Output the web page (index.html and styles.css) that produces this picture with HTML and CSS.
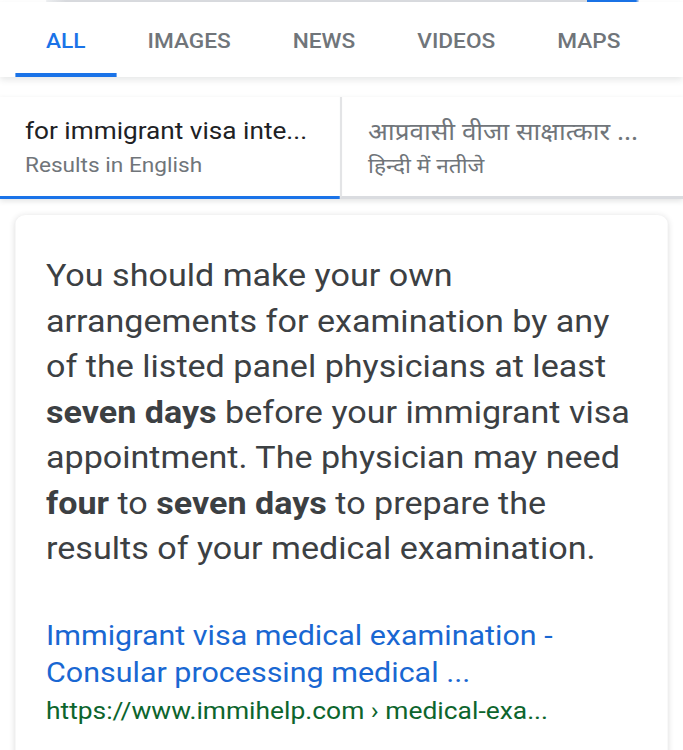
FILE: index.html
```html
<!DOCTYPE html>
<html lang="en">
<head>
    <meta charset="UTF-8">
    <meta name="viewport" content="width=device-width, initial-scale=1.0">
    <title>for immigrant visa interview - Google Search</title>
    <link rel="stylesheet" href="styles.css">
</head>
<body>

<div class="page">

    <div class="search-edge">
        <div class="search-edge-line"></div>
    </div>

    <div class="tabs">
        <div class="tab active">ALL</div>
        <div class="tab">IMAGES</div>
        <div class="tab">NEWS</div>
        <div class="tab">VIDEOS</div>
        <div class="tab">MAPS</div>
        <div class="tab">SHOPPING</div>
        <div class="tabs-fade"></div>
    </div>

    <div class="lang-row">
        <div class="lang active">
            <div class="lang-title">for immigrant visa inte...</div>
            <div class="lang-sub">Results in English</div>
        </div>
        <div class="lang">
            <div class="lang-title hi">आप्रवासी वीजा साक्षात्कार ...</div>
            <div class="lang-sub hi">हिन्दी में नतीजे</div>
        </div>
    </div>

    <div class="card">
        <p class="snippet">
            You should make your own arrangements for examination by any of the listed panel physicians at least
            <b>seven days</b> before your immigrant visa appointment. The physician may need
            <b>four</b> to <b>seven days</b> to prepare the results of your medical examination.
        </p>
        <a class="result-link" href="#">Immigrant visa medical examination - Consular processing medical ...</a>
        <div class="result-url">https://www.immihelp.com › medical-exa...</div>
    </div>

</div>

</body>
</html>
```

FILE: styles.css
```css
body {
    margin: 0;
    background: #fff;
    font-family: Roboto, "Noto Sans", sans-serif;
    overflow: hidden;
}

.page {
    width: 621px;
    transform: scaleX(1.1);
    transform-origin: 0 0;
}

.search-edge {
    padding: 0 40px 0 42px;
}
.search-edge-line {
    height: 2px;
    background: linear-gradient(90deg, #eef0f2 0, #dadce0 18px, #dadce0 492px, #1a73e8 492px, #1a73e8 536px, #e8eaed 539px);
}

/* tab bar */
.tabs {
    position: relative;
    display: flex;
    height: 75px;
    padding-left: 13.6px;
    background: #fff;
    box-shadow: 0 3px 6px rgba(60, 64, 67, 0.12);
    overflow: hidden;
    white-space: nowrap;
}
.tab {
    padding: 27px 28.2px 0;
    font-size: 20.6px;
    font-weight: 500;
    color: #70757a;
    border-bottom: 4px solid transparent;
    box-sizing: border-box;
}
.tab.active {
    color: #1a73e8;
    border-bottom-color: #1a73e8;
}
.tabs-fade {
    position: absolute;
    right: 0;
    top: 0;
    bottom: 0;
    width: 40px;
    background: linear-gradient(90deg, rgba(255, 255, 255, 0.5), rgba(255, 255, 255, 0.88) 70%);
}

/* language chooser */
.lang-row {
    display: flex;
    margin-top: 20px;
    background: #fff;
    box-shadow: 0 2px 5px rgba(60, 64, 67, 0.15);
}
.lang {
    flex: 1;
    height: 102px;
    padding: 19px 0 0 22.7px;
    box-sizing: border-box;
    border-bottom: 3px solid #dadce0;
    white-space: nowrap;
    overflow: hidden;
}
.lang + .lang {
    border-left: 2px solid #e3e4e6;
    padding-left: 23.5px;
}
.lang.active {
    border-bottom-color: #1a73e8;
}
.lang-title {
    font-size: 23.8px;
    line-height: 30px;
    color: #202124;
}
.lang-sub {
    font-size: 20.6px;
    line-height: 38px;
    color: #70757a;
}
.lang-title.hi {
    font-size: 23.7px;
}
.lang-title.hi,
.lang-sub.hi {
    color: #70757a;
    font-family: "Noto Sans", "Lohit Devanagari", sans-serif;
}

/* answer card */
.card {
    margin: 16px 13.6px 0;
    padding: 38px 27px 40px 28.2px;
    background: #fff;
    border-radius: 9px;
    box-shadow: 0 1px 6px rgba(32, 33, 36, 0.16);
    min-height: 600px;
}
.snippet {
    margin: 0;
    font-size: 31px;
    line-height: 45.5px;
    color: #3c4043;
}
.snippet b {
    font-weight: 700;
}
.result-link {
    display: block;
    margin-top: 45px;
    font-size: 27.7px;
    line-height: 37px;
    color: #1967d2;
    text-decoration: none;
}
.result-url {
    margin-top: 2px;
    font-size: 24px;
    line-height: 36px;
    color: #0d652d;
}
```
